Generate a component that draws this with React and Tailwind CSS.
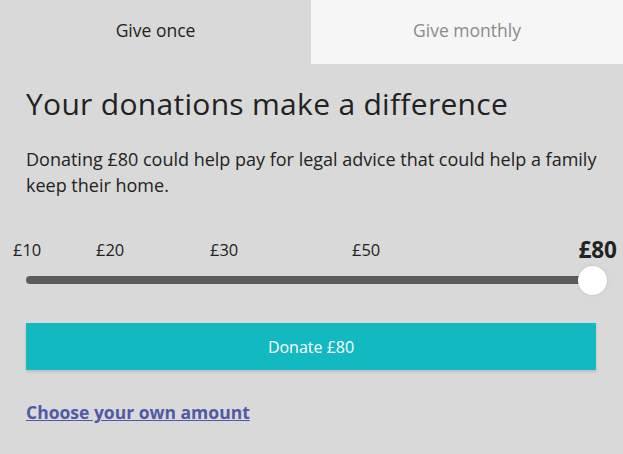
import React, { useState } from 'react';

// Ticks shown above the slider
const ticks = [
  { label: '£10', pos: 'left-[13px]' },
  { label: '£20', pos: 'left-[96px]' },
  { label: '£30', pos: 'left-[210px]' },
  { label: '£50', pos: 'left-[352px]' },
];

const App = () => {
  const [tab, setTab] = useState('once');
  const amount = 80;

  return (
    <div className="w-[623px] h-[454px] bg-[#d9d9d9] font-['Open_Sans',sans-serif] text-[#222] overflow-hidden">
      {/* Tabs */}
      <div className="flex h-[64px]">
        <button
          onClick={() => setTab('once')}
          className={`w-[311px] text-[17.5px] pb-[4px] ${tab === 'once' ? 'bg-[#d9d9d9] text-[#222]' : 'bg-[#f6f6f6] text-[#8a8a8a]'}`}
        >
          Give once
        </button>
        <button
          onClick={() => setTab('monthly')}
          className={`flex-1 text-[17.5px] pb-[4px] ${tab === 'monthly' ? 'bg-[#d9d9d9] text-[#222]' : 'bg-[#f6f6f6] text-[#8a8a8a]'}`}
        >
          Give monthly
        </button>
      </div>

      <div className="px-[26px]">
        <h1 className="text-[30px] leading-[36px] mt-[22px] tracking-[0.3px]">Your donations make a difference</h1>
        <p className="text-[18px] leading-[26px] mt-[24px]">
          {`Donating £${amount} could help pay for legal advice that could help a family keep their home.`}
        </p>
      </div>

      {/* Slider */}
      <div className="relative h-[68px] mt-[40px]">
        {ticks.map((t) => (
          <span key={t.label} className={`absolute top-0 text-[16.5px] ${t.pos}`}>
            {t.label}
          </span>
        ))}
        <span className="absolute top-[-5px] right-[6px] text-[22.5px] font-bold">{`£${amount}`}</span>
        <div className="absolute left-[26px] w-[560px] top-[38px] h-[8px] rounded-full bg-[#5b5b5b]" />
        <div className="absolute left-[578px] top-[28px] w-[29px] h-[29px] rounded-full bg-white shadow-[0_0_3px_rgba(0,0,0,0.15)]" />
      </div>

      <div className="px-[26px] mt-[17px]">
        <button className="w-[570px] h-[47px] bg-[#13b9c1] text-white text-[16px] shadow-[0_2px_3px_rgba(0,0,0,0.12)]">
          {`Donate £${amount}`}
        </button>
        <div className="mt-[29px]">
          <a href="#" className="text-[17.5px] font-bold text-[#5059a6] underline">
            Choose your own amount
          </a>
        </div>
      </div>
    </div>
  );
};

export default App;
